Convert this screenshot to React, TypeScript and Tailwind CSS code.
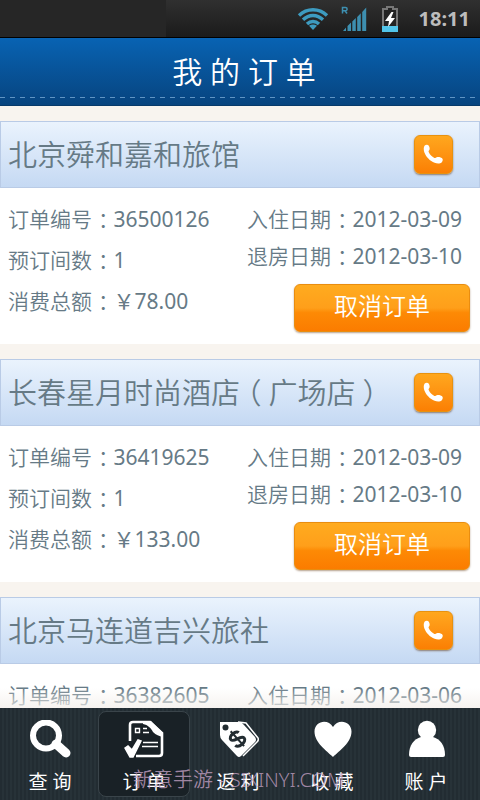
import React from 'react';

interface Order {
  hotel: string;
  id: string;
  rooms: string;
  total: string;
  checkIn: string;
  checkOut: string;
}

const orders: Order[] = [
  { hotel: '北京舜和嘉和旅馆', id: '36500126', rooms: '1', total: '￥78.00', checkIn: '2012-03-09', checkOut: '2012-03-10' },
  { hotel: '长春星月时尚酒店（广场店）', id: '36419625', rooms: '1', total: '￥133.00', checkIn: '2012-03-09', checkOut: '2012-03-10' },
  { hotel: '北京马连道吉兴旅社', id: '36382605', rooms: '1', total: '￥98.00', checkIn: '2012-03-06', checkOut: '2012-03-07' },
];

const HotelName: React.FC<{ name: string }> = ({ name }) => (
  <h2 className="text-[29px] leading-10 font-[350] whitespace-nowrap">
    {name.split(/([（）])/).map((part, i) =>
      /[（）]/.test(part) ? (
        <span key={i} className="px-[7px] [font-feature-settings:'halt']">{part}</span>
      ) : (
        part
      )
    )}
  </h2>
);

const Field: React.FC<{ label: string; value: string }> = ({ label, value }) => (
  <div className="flex whitespace-nowrap">
    <dt>
      {label}
      <span className="pr-[5px] pl-[6px] [font-feature-settings:'halt']">：</span>
    </dt>
    <dd className="font-normal">{value}</dd>
  </div>
);

const StatusBar: React.FC = () => (
  <div className="flex h-[38px] shrink-0 border-b border-black bg-[#262626]">
    <div className="w-[166px]" />
    <div className="flex flex-1 items-center justify-end bg-linear-to-b from-[#303030] to-[#1b1b1b] pr-2.5">
      <svg width="32" height="24" viewBox="0 0 32 24" fill="none" stroke="#3d9bc0" strokeWidth="3.4">
        <path d="M2 8.500C10 .9 22 .9 30 8.500" />
        <path d="M6 12.800C12 7 20 7 26 12.800" />
        <path d="M10 17C13.500 13.600 18.500 13.600 22 17" />
        <path d="M16 23l-4-4.200c2.400-1.900 5.600-1.900 8 0z" fill="#3d9bc0" stroke="none" />
      </svg>
      <svg className="ml-3" width="26" height="26" viewBox="0 0 26 26" fill="#3d8fb0">
        <path d="M1.500 7.500V1.500h3a1.600 1.600 0 0 1 0 3.200h-3M4 4.700l2 2.800" fill="none" stroke="#3d8fb0" strokeWidth="1.500" />
        <path d="M2 25l3-3.500V25zM6.500 25v-5l3.500-3.500V25zM11.300 25v-9.500l3.500-3.500v13zM16.200 25V11l3.600-3.800V25zM21.200 25V6l4-4.500V25z" />
      </svg>
      <svg className="ml-3.5" width="18" height="28" viewBox="0 0 18 28">
        <path d="M6 2h6v2h4v22H2V4h4z" fill="#232323" stroke="#777" strokeWidth="2" />
        <path d="M1 21h16v6H1z" fill="#52c5ea" />
        <path d="M10.500 7L4 16h4l-1 6 7-9h-4l2.500-6z" fill="#fff" />
      </svg>
      <span className="ml-5 text-[20px] leading-8 font-bold text-[#bcbcbc]">18:11</span>
    </div>
  </div>
);

const Header: React.FC = () => (
  <header className="relative flex h-[68px] shrink-0 items-center justify-center border-b border-[#073a6a] bg-linear-to-b from-[#0863b3] to-[#07447f]">
    <h1 className="pl-2 text-[30px] leading-10 font-[350] text-white">我 的 订 单</h1>
    <div className="absolute inset-x-0 bottom-[7px] h-px bg-[repeating-linear-gradient(90deg,#5f94c4_0_5px,transparent_5px_10px)]" />
  </header>
);

const OrderCard: React.FC<{ order: Order }> = ({ order }) => (
  <article className="mb-[15px] bg-white">
    <div className="flex h-[67px] items-center justify-between border border-[#b9cbe6] bg-linear-to-b from-[#eaf3fd] to-[#c5d9f3] pr-[26px] pl-[7px]">
      <HotelName name={order.hotel} />
      <button
        type="button"
        aria-label="电话"
        className="flex size-[39px] items-center justify-center rounded-md border border-[#e8920f] bg-linear-to-b from-[#ffa71d] to-[#fb7f03] shadow-[0_1px_2px_#8a7a70]"
      >
        <svg width="21" height="21" viewBox="0 0 21 21" fill="#fff">
          <path d="M1.500 1.800C2.600.4 5 .4 5.800 1.700c.9 1.500 1.200 3.300.5 4.400-.5.800-1 1.200-.6 2 1.200 2.700 3.200 4.700 5.700 5.900.9.400 1.400-.4 2.300-.8 1.500-.6 3.700-.1 5.200.9 1.300.9 1.100 3.200-.3 4.400-1.600 1.400-4.500 1.300-7 .3C7 17 3 12.800 1.400 8.500.6 6.200.4 3.400 1.500 1.800z" />
        </svg>
      </button>
    </div>
    <div className="flex h-[156px] justify-between pr-2.5 pl-2 text-[21px] font-[350]">
      <dl className="grid auto-rows-[41px] content-start pt-[11px] leading-[41px]">
        <Field label="订单编号" value={order.id} />
        <Field label="预订间数" value={order.rooms} />
        <Field label="消费总额" value={order.total} />
      </dl>
      <div className="flex w-[223px] flex-col pt-[13px] leading-[37px]">
        <dl className="grid auto-rows-[37px]">
          <Field label="入住日期" value={order.checkIn} />
          <Field label="退房日期" value={order.checkOut} />
        </dl>
        <button
          type="button"
          className="mt-[9px] h-12 w-44 self-end rounded-md border border-[#e98d10] bg-[linear-gradient(#ffab1f,#ff9f1a_50%,#fd8a05_60%,#fb7c00)] pb-1 text-2xl text-white shadow-[0_1px_2px_#b5a08c]"
        >
          取消订单
        </button>
      </div>
    </div>
  </article>
);

const SearchIcon = () => (
  <svg width="42" height="38" viewBox="0 0 42 38" fill="none" stroke="#fff">
    <circle cx="17" cy="15.500" r="13" strokeWidth="6" />
    <path d="M27 24l10 9" strokeWidth="9" strokeLinecap="round" />
  </svg>
);

const OrderIcon = () => (
  <svg width="42" height="38" viewBox="0 0 42 38" fill="none" stroke="#fff">
    <path d="M7 21V5q0-3 3-3h17l12 11v20q0 3-3 3H13" strokeWidth="2.600" />
    <path d="M20 1h8l12 12v4c-4-1-7-2-10-5-2-4-5-7-10-8z" fill="#fff" stroke="none" />
    <path d="M12.500 8.500h4v4h-4zM20 8.500h4M20 12.500h6M20 22.500h15M19 26.500h16" strokeWidth="1.400" />
    <path d="M2 28l3-2 4 4 6-10 3 1-8 16H7z" fill="#fff" strokeWidth="1.500" />
  </svg>
);

const RebateIcon = () => (
  <svg width="42" height="38" viewBox="0 0 42 38">
    <path d="M21 2l8 1 12 15q1 2-1 4L26 36" fill="none" stroke="#fff" strokeWidth="1.500" />
    <path d="M3 2h19q3 0 5 3l11 12q2 3 0 5L24 36q-2 2-4 0L5 20Q3 18 3 15z" fill="#fff" />
    <circle cx="8.500" cy="7.500" r="3" fill="#222c31" />
    <g transform="rotate(-42 20 19)" fill="none" stroke="#222c31">
      <path d="M25.500 15.500C25 11.500 15 11 15 15.500c0 4.500 11 2.500 11 7.500 0 4.500-11 4.500-11.500-.5" strokeWidth="3" />
      <path d="M20.500 9v20" strokeWidth="2" />
    </g>
  </svg>
);

const HeartIcon = () => (
  <svg width="42" height="38" viewBox="0 0 42 38" fill="#fff">
    <path d="M22 37C16 31 3.500 23 3.500 11.500 3.500 1 17-2 22 7c5-9 18.500-6 18.500 4.500C40.500 23 28 31 22 37z" />
  </svg>
);

const AccountIcon = () => (
  <svg width="42" height="38" viewBox="0 0 42 38" fill="#fff">
    <circle cx="22" cy="10" r="9.200" />
    <path d="M4 35C4 25 9 19 16 17h12c7 2 12 8 12 18q0 2-2 2H6q-2 0-2-2z" />
  </svg>
);

const tabs = [
  { label: '查 询', Icon: SearchIcon },
  { label: '订 单', Icon: OrderIcon, active: true },
  { label: '返 利', Icon: RebateIcon },
  { label: '收 藏', Icon: HeartIcon },
  { label: '账 户', Icon: AccountIcon },
];

const TabBar: React.FC = () => (
  <nav className="relative grid h-[92px] shrink-0 grid-cols-5 bg-[repeating-linear-gradient(90deg,#222c32_0_2px,#273238_2px_4px)] py-[3px] pr-[7px] pl-[3px]">
    {tabs.map(({ label, Icon, active }) => (
      <a
        key={label}
        href="#"
        className={`mx-px flex flex-col items-center rounded-lg border pt-2 text-[19px] text-white ${
          active ? 'border-[#3a444a] bg-[#192126]' : 'border-transparent'
        }`}
      >
        <Icon />
        <span className="mt-3 leading-6">{label}</span>
      </a>
    ))}
    <span className="pointer-events-none absolute bottom-1 left-[133px] text-[20px] leading-8 font-[350] whitespace-nowrap text-[#c3a0c3]/80">
      新意手游 - SIXINYI.COM
    </span>
  </nav>
);

const App: React.FC = () => {
  return (
    <div className="flex h-screen flex-col overflow-hidden bg-[#f8f4ef] font-['Noto_Sans','Noto_Sans_CJK_SC',sans-serif] text-[#667a86]">
      <StatusBar />
      <Header />
      <main className="relative min-h-0 flex-1 overflow-hidden pt-[15px]">
        {orders.map((order) => (
          <OrderCard key={order.id} order={order} />
        ))}
        <div className="pointer-events-none absolute inset-x-0 bottom-0 h-5 bg-linear-to-b from-transparent to-[#f4f0ec]/80" />
      </main>
      <TabBar />
    </div>
  );
};

export default App;
